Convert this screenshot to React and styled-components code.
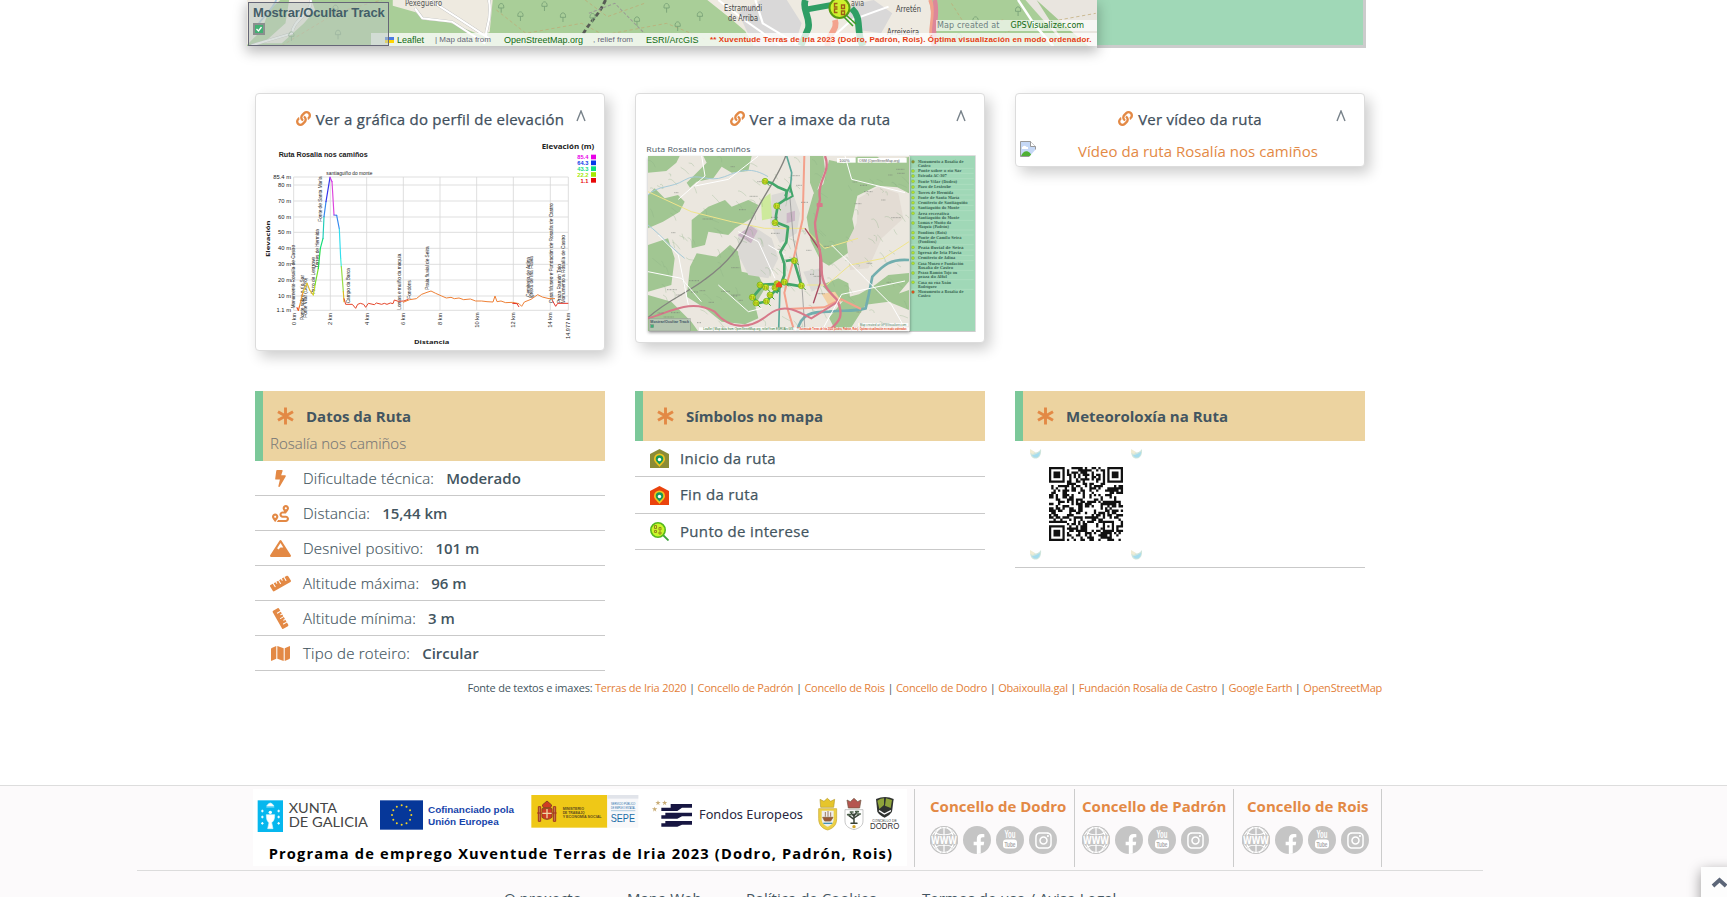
import React from "react";
import styled, { createGlobalStyle } from "styled-components";
import { FaLink, FaBolt, FaRoute, FaMountain, FaRuler, FaMap, FaFacebookF, FaInstagram } from "react-icons/fa";

const Global = createGlobalStyle`
  * { box-sizing: border-box; }
  body { margin: 0; background: #fff; color: #435560; font-family: "Open Sans", sans-serif; overflow: hidden; }
  a { color: inherit; text-decoration: none; }
  svg { display: block; flex: none; }
`;
const Page = styled.div`height: 897px; overflow: hidden; position: relative; display: flex; flex-direction: column;`;
const MapStrip = styled.section`display: flex; height: 48px; margin-left: 247px; flex: none; position: relative; z-index: 1;`;
const MapView = styled.div`position: relative; width: 850px; height: 46px; box-shadow: 0 5px 12px 1px rgba(0,0,0,.27); clip-path: inset(0 -25px -30px -25px);`;
const MapSide = styled.div`width: 269px; height: 48px; background: #a0d8b7; border: solid #ccc; border-width: 0 3px 3px 0; position: relative; z-index: -1;`;
const TrackToggle = styled.div`
  position: absolute; left: 1px; top: 2px; width: 141px; height: 44px; border: 1px solid #667; background: rgba(190,200,195,.55);
  color: #435e68; font: bold 13px/19px "Liberation Sans", sans-serif; padding-left: 4px; letter-spacing: -.13px; white-space: nowrap;
`;
const Check = styled.span`display: grid; place-items: center; width: 12px; height: 12px; margin-top: 1px; background: #42b072; border: 2px solid #8b8f8e;`;
const Attribution = styled.div`
  position: absolute; right: 0; bottom: 0; width: 726px; height: 13px; background: rgba(255,255,255,.78); display: flex; align-items: center;
  padding-left: 14px; font: 8px "Liberation Sans", sans-serif; color: #667; white-space: nowrap;
`;
const MapLink = styled.a`color: #106a10; font-size: ${p => p.$size || 9}px; width: ${p => p.$w}px; margin: 0 ${p => p.$gap || 0}px 0 ${p => p.$ml || 0}px; letter-spacing: ${p => p.$ls || 0}px;`;
const Muted = styled.span`width: ${p => p.$w}px; margin-right: ${p => p.$gap}px;`;
const Warn = styled.b`color: #e63c12; font-size: 8px; letter-spacing: .13px;`;
const Created = styled.div`
  position: absolute; right: 0; top: 20px; width: 161px; height: 11px; background: rgba(255,255,255,.65); font: 8px/12px "DejaVu Sans", sans-serif; color: #6d8080; display: flex; gap: 11px; white-space: nowrap; padding-left: 1px; letter-spacing: .15px;
`;
const Cols = styled.div`display: grid; grid-template-columns: repeat(3, 350px); gap: 30px; margin-left: 255px; align-items: start; flex: none; height: ${p => p.$h}px; margin-top: ${p => p.$top || 0}px;`;
const Card = styled.article`border: 1px solid #dcdcdc; border-radius: 4px; background: #fff; box-shadow: 5px 6px 14px rgba(0,0,0,.2); height: ${p => p.$h}px;`;
const CardTitle = styled.h2`
  margin: 0; height: 46px; display: grid; grid-template-columns: 1fr auto 1fr; align-items: center; font-size: 15px; font-weight: 500; padding-top: 3px; color: #414f5c;
`;
const TitleText = styled.span`display: flex; align-items: center; gap: 5px; letter-spacing: .24px; -webkit-text-stroke: .25px #414f5c; svg { color: #e38945; }`;
const Caret = styled.svg`justify-self: end; margin: -5px 18px 0 0;`;
const CardLeft = styled.span``;
const Video = styled.div`display: flex; height: 28px; padding-left: 4px; margin-top: 1px;`;
const VideoLink = styled.a`color: #e38945; font-size: 15px; line-height: 20px; margin-left: 42px; letter-spacing: .03px;`;
const Head = styled.header`height: ${p => p.$h}px; background: #ecd3a0; border-left: 8px solid #7bc899; padding: 13px 0 0 14px;`;
const HeadTitle = styled.h3`margin: 0; display: flex; align-items: center; gap: 12px; height: 24px; font-size: 15px; font-weight: 700; color: #435560;`;
const Sub = styled.div`margin: 4px 0 0 -7px; font-size: 15px; font-weight: 300; color: #777; line-height: 22px; -webkit-text-stroke: .12px #777;`;
const Row = styled.div`height: ${p => p.$h || 35}px; border-bottom: 1px solid #c9c9c9; display: flex; align-items: center; font-size: 15px; font-weight: 300; letter-spacing: .23px; -webkit-text-stroke: .18px #435560;`;
const SymbolRow = styled(Row)`font-weight: 500; letter-spacing: .32px; padding-bottom: 2px; -webkit-text-stroke-width: .25px;`;
const RowIcon = styled.span`width: 48px; padding-right: 12px; padding-left: 15px; color: #e38945; display: flex; justify-content: center;`;
const SymbolIcon = styled.span`width: 45px; padding: 2px 0 0 15px;`;
const Value = styled.b`margin-left: 12px; font-weight: 600; letter-spacing: 0; -webkit-text-stroke: 0;`;
const Sources = styled.p`
  margin: 6px 0 0; padding-left: 467.5px; height: 21px; line-height: 21px; font-size: 11px; white-space: nowrap; letter-spacing: -.224px;
  a { color: #e38038; }
`;
const Footer = styled.footer`margin-top: auto; height: 112px; border-top: 1px solid #ddd; background: #fcfafb; flex: none;`;
const Band = styled.div`height: 85px; margin: 0 244px 0 137px; border-bottom: 1px solid #dcdcdc; display: flex; padding: 3px 0 4px 116px;`;
const Banner = styled.div`width: 654px; height: 77px; background: #fff; margin-right: 7px;`;
const Town = styled.div`width: ${p => p.$w}px; height: 78px; border-left: 1px solid #ccc; padding: 6px 0 0 ${p => p.$pad}px; ${p => p.$last && "border-right: 1px solid #ccc;"}`;
const TownName = styled.a`display: block; color: #e38945; font-weight: 700; font-size: 15px; line-height: 22px; margin-left: ${p => p.$ml || 0}px; white-space: nowrap; letter-spacing: .03px;`;
const Socials = styled.div`display: flex; gap: 5px; margin-top: 9px;`;
const Dot = styled.a`width: 28px; height: 28px; border-radius: 50%; background: #c5c5c5; color: #fff; display: grid; place-items: center; overflow: hidden; padding: ${p => p.$drop ? "8px 0 0 4px" : 0};`;
const Links = styled.nav`padding: 15px 0 0 504px; display: flex; font-size: 15px; line-height: 24px; white-space: nowrap;`;
const FLink = styled.a`width: ${p => p.$w}px; flex: none; letter-spacing: ${p => p.$ls || 0}px;`;
const ToTop = styled.button`
  position: absolute; right: -14px; bottom: -10px; width: 40px; height: 40px; border: 0; padding: 0 0 10px 10px; background: #fdfdfd; box-shadow: 0 4px 14px rgba(0,0,0,.4); display: flex; align-items: center;
`;

const rng = seed => () => { seed = (seed * 16807) % 2147483647; return seed / 2147483647; };
const T = ({ x, y, s, w, c = "#222", b, children, r, f = "Liberation Sans", a, adj = "spacingAndGlyphs" }) => (
  <text x={x} y={y} fontSize={s} textLength={w} lengthAdjust={adj} fill={c} fontWeight={b || 400} fontFamily={`"${f}", sans-serif`} textAnchor={a}
    transform={r ? `rotate(-90 ${x} ${y})` : undefined}>{children}</text>
);

function Tree({ x, y }) {
  return <path d={`M${x} ${y + 18}v-14m-7 0c-2-18 16-18 14 0z`} stroke="#79a277" strokeWidth="2.5" fill="none" />;
}
function Poi({ x, y }) {
  return (
    <g transform={`translate(${x} ${y})`}>
      <path d="M6 6l7 7" stroke="#3c9c24" strokeWidth="3" />
      <circle r="9" fill="#c8f02a" stroke="#6aa412" strokeWidth="2" />
      <path d="M-5-4h3v3h-3zM-5 1h3v3h-3zM2-2h3v3H2zM2 3h3v2H2z" fill="none" stroke="#977b12" strokeWidth="1.2" />
    </g>
  );
}

function BigMap() {
  return (
    <svg width="850" height="46" viewBox="0 0 850 46">
      <rect width="850" height="46" fill="#a9ce98" />
      <g transform="scale(.37 .3333) translate(-46 0)" fill="none">
        <path d="M46 0h90l-30 30-20 60-40 45zM160 0h60l10 30-30 40-60 60h-50l60-60zM440 0h270l-8 95-20 12-90-40-70-8-20-22-62-20z" fill="#eeeae0" />
        <path d="M1290 0h600l20 138h-490l-28-45-40-38z" fill="#eeeae1" />
        <path d="M1375 40l60-40h70l40 70-20 68h-110zM1650 20l90-20 50 40-30 60-60-10z" fill="#d9d8d8" />
        <path d="M2150 0h200v138h-90z" fill="#e9e5df" />
        <path d="M2180 0l90 90 50 48h-60z" fill="#a3c890" />
        <path d="M125 0c-10 30-30 40-60 90" stroke="#a4c8dc" strokeWidth="5" />
        <path d="M218 0c6 40-50 60-50 100l-110 36M500 25l20 30 80 10 90 65M540 0l70 50 90 65M700 0c10 60-10 80-8 110" stroke="#bbb" strokeWidth="8" />
        <path d="M218 0c6 40-50 60-50 100l-110 36M500 25l20 30 80 10 90 65M540 0l70 50 90 65M700 0c10 60-10 80-8 110M1320 0l70 60 100 78M1420 0l20 70 90 60M1620 120l60-60 100-40" stroke="#fff" strokeWidth="6" />
        <path d="M140 137l150-100 120-37M720 30l80 70 150-30 60 35 170-35 110 50M960 0l60 50 100-40M1950 10l40 70 100-20M2050 130l60-40M2240 60l100-20" stroke="#bfa873" strokeWidth="2" strokeDasharray="9 7" />
        <path d="M1015 0c-20 50-40 60-62 105" stroke="#575c55" strokeWidth="8" strokeDasharray="13 8" />
        <path d="M970 40l70-30 80 90" stroke="#9a9a95" strokeWidth="3" strokeDasharray="9 5" />
        <path d="M1555 0c-10 30 15 50 8 85l-20 52M1560 28l90-18M1680 25c30 30 10 60 30 113" stroke="#2f9e65" strokeWidth="18" />
        <path d="M1635 60c10 30-20 40-20 78" stroke="#f3a38e" strokeWidth="16" />
        <path d="M1892 0c20 50-10 90 10 138" stroke="#f1a18c" strokeWidth="10" />
        <path d="M1905 0c12 60-12 80 2 138" stroke="#dc879a" strokeWidth="12" />
        <path d="M2130 0l45 75 50 63" stroke="#fff" strokeWidth="7" />
        {[[285, 25], [166, 105], [292, 100], [785, 45], [850, 15], [900, 48], [1100, 60], [980, 50], [733, 20], [1180, 20], [1270, 45], [1210, 75], [2015, 60], [2130, 30], [1970, 110]].map((p, i) => <Tree key={i} x={p[0]} y={p[1]} />)}
      </g>
      <circle cx="592.500" cy="8" r="10" fill="#cef02e" stroke="#5a9a12" strokeWidth="2" />
      <path d="M599 15l10 9m-12-7l9 9" stroke="#3c9c24" strokeWidth="1.6" />
      <path d="M590.500 3.500h-3v3.500h3M590.500 9h-3v3.500h3M594.500 5h3v3.500h-3zM594.500 11h3v3.500h-3z" fill="none" stroke="#a05d15" strokeWidth="1.400" />
      <T x={158} y={6} s={8.5} w={37} c="#555" f="DejaVu Sans">Pexegueiro</T>
      <T x={477} y={11} s={8.5} w={38} c="#444" f="DejaVu Sans">Estramundi</T>
      <T x={481} y={21} s={8.5} w={30} c="#444" f="DejaVu Sans">de Arriba</T>
      <T x={604} y={6} s={8.5} w={13} c="#555" f="DejaVu Sans">avia</T>
      <T x={649} y={12} s={8.5} w={25} c="#444" f="DejaVu Sans">Arretén</T>
      <T x={640} y={35} s={8.5} w={32} c="#444" f="DejaVu Sans">Arreixeira</T>
    </svg>
  );
}

const peak = [[156, 668, "#e22"], [160, 676, "#e42"], [164, 662, "#e62"], [174, 622, "#e93"], [186, 595, "#ec3"], [194, 615, "#db3"], [205, 630, "#db3"], [210, 600, "#cd2"], [220, 550, "#7d2"], [226, 490, "#2d4"], [234, 460, "#1d7"], [237, 395, "#2cb"], [243, 350, "#38e"], [255, 277, "#33e"], [261, 290, "#c3e"], [267, 390, "#d4d"], [275, 391, "#57e"], [283, 432, "#38e"], [287, 520, "#3de"], [289, 545, "#4ed"], [295, 620, "#9d4"], [297, 650, "#db2"]];
function Elevation() {
  const labels = [[150, 670, 190, "Monumento Rosalía de Castro"], [176, 705, 135, "Ponte sobre o río Sar"], [187, 698, 120, "Fonte Vilar (Dodro)"], [210, 628, 112, "Pazo de Lestrove"], [221, 548, 116, "Torres de Hermida"], [232, 410, 136, "Fonte de Santa María"], [315, 655, 106, "Campo da Barca"], [467, 674, 168, "Lomas e muiño da maquia"], [497, 641, 55, "Fondóns"], [553, 614, 130, "Praia fluvial de Seira"], [854, 636, 120, "Cemiterio de Adina"], [864, 640, 127, "Igrexa de Iria Flavia"], [924, 655, 300, "Casa Museo e Fundación de Rosalía de Castro"], [948, 655, 118, "Praza Ramón Tojo"], [961, 655, 205, "Monumento a Rosalía de Castro"]];
  return (
    <svg width="348" height="210" viewBox="33 165 1044 630">
      <path d={[276, 300, 348, 396, 442, 490, 538, 585, 633, 676].map(y => `M146 ${y}H970`).join("") + [146, 256, 365, 475, 585, 695, 805, 916, 970].map(x => `M${x} 276V676`).join("")} stroke="#d8d8d8" strokeWidth="2.5" />
      <T x={101} y={215} s={20} w={267} b={700}>Ruta Rosalia nos camiños</T>
      <T x={890} y={191} s={20} w={158} b={700} f="Open Sans">Elevación (m)</T>
      {[["85.4", "#e800e8"], ["64.3", "#0838e8"], ["43.3", "#08e080"], ["22.2", "#a4e800"], ["1.1", "#e80808"]].map(([n, c], i) => (
        <g key={n}><rect x="1038" y={209 + i * 17.5} width="15" height="14" fill={c} /><T x={1030} y={223 + i * 17.5} s={17} c={c} b={700} a="end">{n}</T></g>
      ))}
      {[["85.4 m", 276], ["80 m", 300], ["70 m", 348], ["60 m", 396], ["50 m", 442], ["40 m", 490], ["30 m", 538], ["20 m", 585], ["10 m", 633], ["1.1 m", 676]].map(([n, y]) => <T key={n} x={138} y={y + 6} s={17.5} a="end">{n}</T>)}
      {[["0 km", 146, 720], ["2 km", 256, 720], ["4 km", 365, 720], ["6 km", 475, 720], ["8 km", 585, 720], ["10 km", 695, 728], ["12 km", 805, 728], ["14 km", 916, 728], ["14.977 km", 970, 762]].map(([n, x, y]) => <T key={n} r x={x + 6} y={y} s={17}>{n}</T>)}
      <T x={244} y={269} s={15} w={138}>santiaguiño do monte</T>
      {labels.map(([x, y, w, n]) => <T key={n} r x={x} y={y} w={w} s={14}>{n}</T>)}
      <T r x={76} y={516} s={18} w={110} b={700} f="Open Sans">Elevación</T>
      <T x={507} y={776} s={18} w={106} b={700} f="Open Sans">Distancia</T>
      {peak.slice(1).map((p, i) => <path key={i} d={`M${peak[i][0]} ${peak[i][1]}L${p[0]} ${p[1]}`} stroke={p[2]} strokeWidth="3.5" strokeLinecap="round" />)}
      <path d="M297 640l5 18 20 0 10 12 6-12 8-3 10 3 6 9 8-12 18 4 6-5 16 4 8-3 8 3 10-4 8 2 4-11 12 4 16-1 14-5" fill="none" stroke="#e5452a" strokeWidth="3" />
      <path d="M474 652l20-8 20-3 16-13 16-6 12-4 14 7 18 8 14 6 14-2 10 4 14-2 14 5 20-2 16 6 18 0 16 2 18 1 6-18 6 17 12-2 14 5 20-1 20 4 8 8 8-13 20-8 20-14 14 7 20 5 18 0" fill="none" stroke="#ee8137" strokeWidth="3" />
      <path d="M922 646l10 18 6-9h32M802 655l14 1 6 10" fill="none" stroke="#e5352a" strokeWidth="3" />
    </svg>
  );
}

const r1 = rng(99);
const relief = Array.from({ length: 150 }, () => {
  const x = 69 + r1() * 780, y = 215 + r1() * 520;
  return `M${x | 0} ${y | 0}q${(r1() * 18) | 0} ${(r1() * 16 - 8) | 0} ${(6 + r1() * 22) | 0} ${(8 + r1() * 20) | 0}`;
}).join("");
const places = Array.from({ length: 46 }, () => [90 + r1() * 730, 225 + r1() * 490, 12 + r1() * 20]);
const pts = [[420, 289], [455, 363], [450, 413], [508, 527], [529, 602], [478, 591], [450, 608], [405, 600], [422, 607], [382, 637], [393, 654], [424, 649], [435, 630], [456, 596]];
const stops = [["Monumento a Rosalía de", 230], ["Castro", 242], ["Ponte sobre o río Sar", 258], ["Estrada AC-307", 273], ["Fonte Vilar (Dodro)", 289], ["Pazo de Lestrobe", 306], ["Torres de Hermida", 322], ["Fonte de Santa María", 338], ["Cemiterio de Santiaguiño", 353], ["Santiaguiño do Monte", 369], ["Área recreativa", 385], ["Santiaguiño do Monte", 398], ["Lomas e Muíño da", 414], ["Maquia (Padrón)", 426], ["Fondóns (Rois)", 443], ["Ponte de Camilo Seira", 458], ["(Fondóns)", 471], ["Praia fluvial de Seira", 487], ["Igrexa de Iria Flavia", 503], ["Cemiterio de Adina", 519], ["Casa Museo e Fundación", 535], ["Rosalía de Castro", 548], ["Praza Ramón Tojo ou", 564], ["praza do Alfol", 576], ["Casa na rúa Xoán", 592], ["Rodríguez", 605], ["Monumento a Rosalía de", 621], ["Castro", 633]];
const wrapped = [1, 11, 13, 16, 21, 23, 25, 27];

function RouteMap() {
  return (
    <svg width="348" height="201" viewBox="33 165 1044 603">
      <defs>
        <clipPath id="mapclip"><rect x="69" y="213" width="783" height="525" /></clipPath>
        <filter id="mapshadow"><feDropShadow dx="1" dy="5" stdDeviation="5" floodOpacity=".4" /></filter>
      </defs>
      <T x={64} y={201} s={24} w={312} c="#4b5864" f="Open Sans">Ruta Rosalía nos camiños</T>
      <rect x="852" y="211" width="200" height="530" fill="#ccc" /><rect x="854" y="213" width="196" height="525" fill="#a0d8b7" />
      <rect x="69" y="213" width="785" height="525" fill="#ebe7df" filter="url(#mapshadow)" />
      <g clipPath="url(#mapclip)" fill="none">
        <path d="M69 213h95l-10 20-30 25-55 5zM235 213h145l-10 45-50 5-30-18-25 35-50 10-20 18-10-15 60-60zM69 330l20-20 30 30 40-10 20 20-15 30-50 30-45 20zM200 405l50-40 50-20 20 20 50-20 30 15-20 40-50 30-20 20-60-10-10 40-40 10zM69 480l60-20 20 60-10 80-70 20zM195 545l20-40 60 10 40-35 25 20 10 60 50 10 20 40-30 50 10 40-40 18-70-8-50-40-55-35zM69 630l70 20 60 60 20 28H69z" fill="#a1c692" />
        <path d="M612 225l45 10 40-20h60l30 20 65-20v110l-35-18-60-5-60 30-15 70 10 50-20 50-60 40-25-15-30-60-12-70 20-70 30-30zM590 600l50-20 30 15 5 40-35 20zM750 600l40-30 62-6v25l-50 60-80 10-50 79h-40l-20-40 50-60 40-10zM555 213l40 0 5 40-30 80-15-40zM780 640l72-25v60l-50-20z" fill="#a1c692" />
        <path d="M700 340l60-35 60 20 15 75-65 60-40 90-55 5-10-80 30-60z" fill="#e3dcd4" />
        <path d="M340 450l40-30 60 40 20 60-30 60-60-10-30-60zM440 330l60-15 25 70-10 60-50 30-30-60zM535 560l50-10 15 50-40 20z" fill="#dbd9d5" />
        <path d="M338 450l40-28 20 15-20 38zM485 385l25-8v30l-25 8z" fill="#cbb6c6" />
        <path d="M408 345l28-20 5 75-30 6z" fill="#cdea9c" />
        <path d="M590 626l40-6 20 30-40 10z" fill="#f2cfa2" />
        <path d={relief} stroke="#8cae83" strokeWidth="3" opacity=".3" />
        <path d="M69 330c30-30 70-20 110-45s70 10 120-10 80-30 130 0M69 420c40 30 60 60 110 100" stroke="#a6cad9" strokeWidth="3" />
        <path d="M69 320l130 60 120 30 100 20 120 0 60 60 100-30" stroke="#f0e58b" strokeWidth="3" />
        <path d="M545 600l60 0 70-60 100-20 77-50" stroke="#f0e58b" strokeWidth="3" />
        <path d="M852 525c-60-5-80 20-110 50l-12 60-8 35c-40 10-60 5-110 10-50 0-85 5-95 58" stroke="#72aeae" strokeWidth="8" />
        <path d="M485 213l15 50-5 60M465 600l-4 138" stroke="#5ba999" strokeWidth="5" />
        <path d="M482 213c-20 60-75 130-112 210-20 60-60 110-130 160-50 40-110 60-171 115" stroke="#84847f" strokeWidth="4" />
        <path d="M495 340l10 120 25 130 10 148" stroke="#999" strokeWidth="2.5" />
        <path d="M538 213l-5 190-30 130-25 90 10 50 20 65M488 672l110-5 50-25 60 30" stroke="#f4a18c" strokeWidth="6" />
        <path d="M540 430l45 65v100l-20 60" stroke="#a94b60" strokeWidth="4" />
        <path d="M600 213c20 50-25 70-15 130l-15 70c2 60 22 80 20 140 0 45 20 65 45 90 30 60-5 75-25 95" stroke="#d7798a" strokeWidth="7" />
        <path d="M69 700c70-20 130-60 200-20 50 60 110 50 160 10 50-40 90-10 130 10l80-50" stroke="#d7798a" strokeWidth="6" />
        <path d="M400 213l-90 70-100 20M100 450l60 60 30 150M280 600l90 80 40-10M620 480l100 100 80 80 40 70M230 213l10 60-80 70M660 213l20 70 160 40M590 738l60-110 190-40M69 560l100 20 60 70M340 440l60 30 50 110M430 480l50 30" stroke="#fff" strokeWidth="3" />
        <path d="M420 289l20 5 20 13 25 10-2 25-24 16-6 34 0 20 36 14-5 45-18 30 12 35 0 35-14 35-10 18M482 528l24-4 24 80-50-8-65 3-30 36 12 20 30-6 12-20 20-20" stroke="#43a66a" strokeWidth="8" strokeLinejoin="round" />
        <path d="M483 345l20-12-8-30-15 30" stroke="#43a66a" strokeWidth="6" />
        <path d={places.map(([x, y, w]) => `M${x | 0} ${y | 0}h${w | 0}`).join("")} stroke="#777c74" strokeWidth="3" strokeDasharray="3 1.500" opacity=".6" />
      </g>
      {pts.map((p, i) => <Poi key={i} x={p[0]} y={p[1]} />)}
      <path d="M453 598l9-9 9 9v9h-18z" fill="#f04b22" />
      <rect x="636" y="219" width="56" height="14" fill="#fff" /><rect x="698" y="219" width="147" height="14" fill="#fff" />
      <T x={643} y={230} s={12} c="#555">100%</T><T x={702} y={230} s={12} w={122} c="#555">OSM (OpenStreetMap.org)</T>
      <rect x="575" y="354" width="18" height="12" rx="2" fill="#d7798a" />
      <rect x="72" y="700" width="124" height="38" fill="#bac5b9" opacity=".8" stroke="#777" strokeWidth="1" />
      <T x={76} y={713} s={12} w={116} b={700} c="#456">Mostrar/Ocultar Track</T><rect x="77" y="719" width="9" height="9" fill="#3cb077" stroke="#777" />
      <rect x="222" y="727" width="630" height="11" fill="#fff" opacity=".85" /><rect x="700" y="714" width="150" height="10" fill="#fff" opacity=".8" />
      <T x={235} y={736} s={9} w={270} c="#287028">Leaflet | Map data from OpenStreetMap.org, relief from ESRI/ArcGIS</T>
      <T x={516} y={736} s={9} w={330} c="#e63c12" b={700}>** Xuventude Terras de Iria 2023 (Dodro, Padrón, Rois). Óptima visualización en modo ordenador.</T>
      <T x={704} y={723} s={10} w={140} c="#4a7a5a">Map created at GPSVisualizer.com</T>
      {stops.map(([n, y], i) => (
        <g key={i}>
          <T x={879} y={y + 4} s={12} c="#3a6654" b={700} f="DejaVu Serif" w={n.length * 6.2}>{n}</T>
          {!wrapped.includes(i) && <circle cx="864" cy={y} r="4.5" fill={i === 0 ? "#8c8c30" : i === 26 ? "#e8481c" : "#b4e030"} stroke="#62a350" />}
          {!wrapped.includes(i) && i > 0 && <path d={`M858 ${y - 8}H1046`} stroke="#b9e2c8" strokeWidth="1.5" />}
        </g>
      ))}
    </svg>
  );
}

function QR() {
  const r = rng(4711), n = 33, cells = [];
  const near = (x, y, a, b) => x >= a - 1 && x <= a + 7 && y >= b - 1 && y <= b + 7;
  for (let y = 0; y < n; y++) for (let x = 0; x < n; x++) {
    const v = r() > 0.49;
    if (near(x, y, 0, 0) || near(x, y, 26, 0) || near(x, y, 0, 26) || (Math.abs(x - 26) < 3 && Math.abs(y - 26) < 3)) continue;
    if (v) cells.push(`M${x} ${y}h1.03v1.03h-1.030z`);
  }
  return (
    <svg width="112" height="112" viewBox="0 0 112 112">
      <g transform="translate(19 19) scale(2.242)">
        <path d={cells.join("")} fill="#111" />
        {[[0, 0], [26, 0], [0, 26]].map(([x, y], i) => <g key={i} transform={`translate(${x} ${y})`}><path d="M.5.5h6v6h-6z" fill="none" stroke="#111" /><path d="M2 2h3v3H2z" fill="#111" /></g>)}
        <path d="M24.500 24.500h4v4h-4z" fill="none" stroke="#111" /><path d="M26 26h1v1h-1z" fill="#111" />
      </g>
      {[[0, 0], [101, 0], [0, 101], [101, 101]].map(([x, y], i) => <g key={i} transform={`translate(${x} ${y})`}><path d="M0 3c4-1 5 5 11-2C12 9 7 12 3 10 1 9 0 6 0 3z" fill="#cfe5dc" /><path d="M2 7c4 0 5-2 8-3 0 5-5 8-8 3z" fill="#a5dcee" /><path d="M0 1l5 3-2 2-3-1z" fill="#f0ecd4" /></g>)}
    </svg>
  );
}

const Star6 = () => <svg width="17" height="18" viewBox="0 0 17 18"><path d="M8.500.5v17M1 4.700l15 8.600M16 4.700L1 13.300" stroke="#e38945" strokeWidth="2.900" /></svg>;
const House = ({ c }) => <svg width="19" height="19" viewBox="0 0 19 19"><path d="M0 5L9.500 0 19 5v14H0z" fill={c} /><path d="M9.500 18C6 14 4 12.500 4 10a5.500 5.500 0 0111 0c0 2.500-2 4-5.500 8z" fill="#f0c51c" /><path d="M9.500 15.500C7 13 5.700 12 5.700 10a3.800 3.800 0 017.600 0c0 2-1.300 3-3.800 5.500z" fill="#16985a" /><circle cx="9.500" cy="10.500" r="1.700" fill="#fff" /></svg>;
const Magnifier = () => <svg width="19" height="19" viewBox="0 0 19 19"><path d="M13 13l5.500 5.500" stroke="#3ca33c" strokeWidth="1.800" /><circle cx="8" cy="8" r="7.200" fill="#c9f52a" stroke="#55b81c" strokeWidth="1.600" /><path d="M4.500 3.500h2v3h-2zM4.500 8.500h2v2h-2zM9 5.500h2v2.500H9zM9 10h2v2H9z" fill="none" stroke="#98851a" strokeWidth="1" /></svg>;
const BrokenImage = () => <svg width="16" height="16" viewBox="0 0 16 16"><path d="M.5.5h10l5 5v10H.5z" fill="#c5d8f6" stroke="#999" /><path d="M10.500.5v5h5" fill="#fff" stroke="#999" /><path d="M2 7c1-3 4-3 5 0zM2 6h6v2H2z" fill="#fff" /><path d="M1 15c2-5 6-6 9-3l2 3z" fill="#4faf34" /><path d="M9 16l7-8v8z" fill="#fff" /></svg>;

function Www() {
  return (
    <svg width="28" height="28" viewBox="0 0 28 28">
      <circle cx="14" cy="14" r="14" fill="#c5c5c5" />
      <path d="M14 1v26M4 6.500c6 3 14 3 20 0M4 21.500c6-3 14-3 20 0M11 1.500C2 8 2 20 11 26.500M17 1.500c9 6.500 9 18.500 0 25" fill="none" stroke="#fff" strokeWidth="1.200" /><circle cx="14" cy="14" r="12.500" stroke="#fff" fill="none" />
      <rect x="0" y="9.500" width="28" height="9" fill="#c5c5c5" />
      <T x={1} y={18} s={11} w={26} c="#fff" b={700} f="DejaVu Sans">WWW</T>
    </svg>
  );
}
function Tube() {
  return <svg width="28" height="28" viewBox="0 0 28 28"><T x={8.5} y={12} s={10} w={11} c="#fff" b={700}>You</T><rect x="7" y="13.500" width="14" height="9" rx="3" fill="#fff" /><T x={8.5} y={20.8} s={7} w={11} c="#aaa" b={700}>Tube</T></svg>;
}
const SocialSet = () => (
  <Socials>
    <Dot><Www /></Dot>
    <Dot $drop><FaFacebookF size={20} /></Dot>
    <Dot><Tube /></Dot>
    <Dot><FaInstagram size={19} /></Dot>
  </Socials>
);

function Crest({ x, kind }) {
  if (kind === 0) return <g transform={`translate(${x} 52)`}><path d="M6 6l12 6 10-9 10 9 12-6-3 24H8z" fill="#e6c52b" stroke="#b39a30" strokeWidth="2" /><path d="M2 34h54v30c0 22-14 30-27 34C14 94 2 84 2 64z" fill="#ecd046" stroke="#c7a62c" strokeWidth="2" /><path d="M11 40h36v24c0 14-8 20-18 24-10-4-18-10-18-24z" fill="#eee" /><path d="M14 60h31l-7 11H20zM22 44v14M30 41v17M38 45v13" fill="#9a5836" stroke="#8a6140" strokeWidth="2.500" /><path d="M16 78h27" stroke="#4692b5" strokeWidth="4" /></g>;
  return <g transform={`translate(${x} 52)`}><path d="M8 8l10 5 11-10 11 10 10-5-4 24H12z" fill="#b55550" stroke="#6b5540" strokeWidth="2" /><path d="M2 37h54v34c0 16-13 22-27 26C15 93 2 87 2 71z" fill="#fff" stroke="#aaa" strokeWidth="2" /><path d="M29 78V50M29 66L14 55M29 62l15-10M29 58l-9-12M29 56l8-11M20 78h18" stroke="#384238" strokeWidth="4.500" strokeLinecap="round" /><path d="M10 52h10M38 50h10M18 44h8M34 43h8" stroke="#4a5f48" strokeWidth="5" strokeLinecap="round" /><circle cx="29" cy="88" r="5" fill="#d0a52a" /></g>;
}
function Logos() {
  return (
    <svg width="654" height="77" viewBox="369 27 1962 231">
      <rect x="383" y="61" width="76" height="95" fill="#06b7ee" />
      <path d="M410 78q11-18 22 0zM409 81h24M409 104h25c0 18-6 21-9 24l4 18h-16l4-18c-6-4-8-12-8-24z" fill="#fff" stroke="#d9f4fb" strokeWidth="2" />
      <circle cx="421" cy="97" r="5" fill="#fff" />
      {[[397, 93], [397, 111], [397, 130], [446, 93], [446, 111], [446, 130]].map(([x, y]) => <path key={`${x}-${y}`} d={`M${x - 4} ${y}h8M${x} ${y - 4}v8`} stroke="#fff" strokeWidth="3" />)}
      <T x={476} y={99} s={41} w={145} c="#454545" f="Lato">XUNTA</T><T x={476} y={140} s={41} w={238} c="#454545" f="Lato">DE GALICIA</T>
      <rect x="750" y="61" width="129" height="88" fill="#063799" />
      {Array.from({ length: 12 }, (_, i) => <circle key={i} cx={815 + 29 * Math.sin(i * Math.PI / 6)} cy={105 - 29 * Math.cos(i * Math.PI / 6)} r="3" fill="#f4d326" />)}
      <T x={894} y={98} s={29} w={258} c="#1745ab" b={700}>Cofinanciado pola</T><T x={894} y={134} s={29} w={212} c="#1745ab" b={700}>Unión Europea</T>
      <rect x="1204" y="45" width="228" height="98" fill="#efc817" /><rect x="1432" y="45" width="93" height="98" fill="#f8f8fa" /><rect x="1432" y="45" width="93" height="11" fill="#e1e4ea" />
      <path d="M1237 75l14-12 14 12-3 8h-22zM1236 86h30v26q-15 12-30 0z" fill="#cf3c22" stroke="#8a4322" strokeWidth="3" /><path d="M1225 80h7v44h-7zM1270 80h7v44h-7zM1221 99h14M1266 99h14" fill="#bd774b" stroke="#a33521" strokeWidth="3" /><path d="M1251 87v28M1237 100h28" stroke="#eed7a5" strokeWidth="4" />
      <T x={1298} y={90} s={11} w={64} c="#5b4a1c" b={700}>MINISTERIO</T><T x={1298} y={103} s={11} w={66} c="#5b4a1c" b={700}>DE TRABAJO</T><T x={1298} y={115} s={11} w={117} c="#5b4a1c" b={700}>Y ECONOMÍA SOCIAL</T>
      <T x={1443} y={75} s={8} w={73} c="#1c6ca8">SERVICIO PÚBLICO</T><T x={1443} y={87} s={8} w={73} c="#1c6ca8">DE EMPLEO ESTATAL</T><path d="M1443 92h73" stroke="#1c6ca8" /><T x={1442} y={126} s={33} w={73} c="#186ca6">SEPE</T>
      <g transform="translate(1530 0)">
        {[[44, 88], [54, 69], [74, 69]].map(([x, y]) => <path key={x} d="M0-8l2 5 6 0-5 4 2 6-5-4-5 4 2-6-5-4 6 0z" transform={`translate(${x} ${y})`} fill="#c9ad78" />)}
        {[[92, 72, 64, 83], [76, 98, 64, 106], [76, 123, 64, 130]].map(([x, y, x2, y2]) => <path key={y} d={`M${x} ${y}H156V${y + 11}H126L112 ${y2 + 10}H${x2}V${y2}H${x}z`} fill="#171642" />)}
        <T x={177} y={118} s={36} w={312} c="#292740" f="Noto Sans">Fondos Europeos</T>
        <Crest x={534} kind={0} /><Crest x={613} kind={1} />
        <path d="M708 57q28-12 53 0l-5 38q-7 12-22 18-16-7-22-18z" fill="#303330" /><path d="M712 62q10-7 20-7v20l-14 12zM738 55l18 5-4 24-17-7z" fill="#8fa43b" /><path d="M717 92l16 10 20-10" stroke="#fff" strokeWidth="4" fill="none" />
        <T x={697} y={125} s={9} w={73} c="#333">CONCELLO DE</T><T x={690} y={147} s={25} w={88} c="#333">DODRO</T>
      </g>
      <T x={416} y={236} s={44} w={1870} c="#000" b={700} f="Open Sans" adj="spacing">Programa de emprego Xuventude Terras de Iria 2023 (Dodro, Padrón, Rois)</T>
    </svg>
  );
}

const Title = ({ children }) => (
  <CardTitle><CardLeft /><TitleText><FaLink size={15} />{children}</TitleText><Caret width="10" height="12" viewBox="0 0 10 12"><path d="M1 11L5 1l4 10" fill="none" stroke="#78828a" strokeWidth="1.400" /></Caret></CardTitle>
);
const facts = [
  [<FaBolt size={17} />, "Dificultade técnica:", "Moderado"],
  [<FaRoute size={17} />, "Distancia:", "15,44 km"],
  [<FaMountain size={21} />, "Desnivel positivo:", "101 m"],
  [<FaRuler size={21} />, "Altitude máxima:", "96 m"],
  [<FaRuler size={21} transform="rotate(90)" />, "Altitude mínima:", "3 m"],
  [<FaMap size={19} />, "Tipo de roteiro:", "Circular"],
];
const sources = ["Terras de Iria 2020", "Concello de Padrón", "Concello de Rois", "Concello de Dodro", "Obaixoulla.gal", "Fundación Rosalía de Castro", "Google Earth", "OpenStreetMap"];

export default function App() {
  return (
    <Page>
      <Global />
      <MapStrip>
        <MapView>
          <BigMap />
          <Created>Map created at <MapLink $w={78} $size={8}>GPSVisualizer.com</MapLink></Created>
          <Attribution>
            <svg width="9" height="6" viewBox="0 0 9 6"><path d="M0 0h9v3H0z" fill="#4c7be1" /><path d="M0 3h9v3H0z" fill="#ffd500" /></svg>
            <MapLink $w={27} $gap={11} $ml={3}>Leaflet</MapLink><Muted $w={57} $gap={12}>| Map data from</Muted>
            <MapLink $w={80} $gap={9}>OpenStreetMap.org</MapLink><Muted $w={41} $gap={12}>, relief from</Muted>
            <MapLink $w={53} $gap={11}>ESRI/ArcGIS</MapLink><Warn>** Xuventude Terras de Iria 2023 (Dodro, Padrón, Rois). Óptima visualización en modo ordenador.</Warn>
          </Attribution>
          <TrackToggle>Mostrar/Ocultar Track<Check><svg width="8" height="8" viewBox="0 0 8 8"><path d="M1.500 4l2 2 3-4" fill="none" stroke="#fff" strokeWidth="1.300" /></svg></Check></TrackToggle>
        </MapView>
        <MapSide />
      </MapStrip>

      <Cols $top={45} $h={298}>
        <Card $h={258}><Title>Ver a gráfica do perfil de elevación</Title><Elevation /></Card>
        <Card $h={250}><Title>Ver a imaxe da ruta</Title><RouteMap /></Card>
        <Card $h={74}><Title>Ver vídeo da ruta</Title><Video><BrokenImage /><VideoLink>Vídeo da ruta Rosalía nos camiños</VideoLink></Video></Card>
      </Cols>

      <Cols $h={280}>
        <section>
          <Head $h={70}><HeadTitle><Star6 />Datos da Ruta</HeadTitle><Sub>Rosalía nos camiños</Sub></Head>
          {facts.map(([icon, label, value]) => <Row key={label}><RowIcon>{icon}</RowIcon>{label}<Value>{value}</Value></Row>)}
        </section>
        <section>
          <Head $h={50}><HeadTitle><Star6 />Símbolos no mapa</HeadTitle></Head>
          <SymbolRow $h={36}><SymbolIcon><House c="#8c8c35" /></SymbolIcon>Inicio da ruta</SymbolRow>
          <SymbolRow $h={37}><SymbolIcon><House c="#ea430d" /></SymbolIcon>Fin da ruta</SymbolRow>
          <SymbolRow $h={36}><SymbolIcon><Magnifier /></SymbolIcon>Punto de interese</SymbolRow>
        </section>
        <section>
          <Head $h={50}><HeadTitle><Star6 />Meteoroloxía na Ruta</HeadTitle></Head>
          <SymbolRow $h={127}><SymbolIcon><QR /></SymbolIcon></SymbolRow>
        </section>
      </Cols>

      <Sources>Fonte de textos e imaxes: {sources.map((s, i) => <React.Fragment key={s}>{i > 0 && " | "}<a>{s}</a></React.Fragment>)}</Sources>

      <Footer>
        <Band>
          <Banner><Logos /></Banner>
          <Town $w={160} $pad={15}><TownName>Concello de Dodro</TownName><SocialSet /></Town>
          <Town $w={159} $pad={7}><TownName>Concello de Padrón</TownName><SocialSet /></Town>
          <Town $w={149} $pad={8} $last><TownName $ml={5}>Concello de Rois</TownName><SocialSet /></Town>
        </Band>
        <Links><FLink $w={123}>O proxecto</FLink><FLink $w={119}>Mapa Web</FLink><FLink $w={176}>Política de Cookies</FLink><FLink>Termos de uso / Aviso Legal</FLink></Links>
      </Footer>
      <ToTop><svg width="18" height="11" viewBox="0 0 18 11"><path d="M2 9l6.500-6L15 9" fill="none" stroke="#5c6678" strokeWidth="3.800" /></svg></ToTop>
    </Page>
  );
}
